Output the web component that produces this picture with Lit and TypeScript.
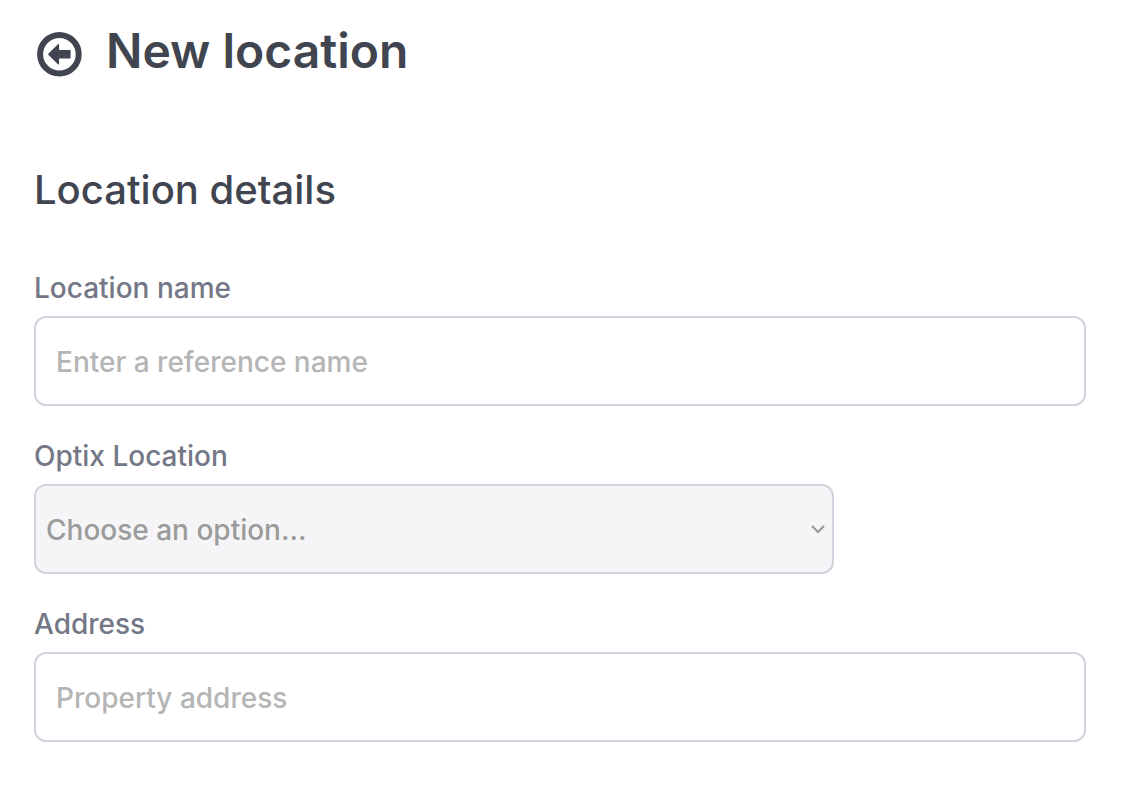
import { LitElement, html, css } from "lit";
import { customElement } from "lit/decorators.js";

@customElement("app-root")
export class AppRoot extends LitElement {
  static styles = css`
    :host {
      display: block;
      box-sizing: border-box;
      padding: 22px 38px 54px 34px;
      font-family: Inter, "Liberation Sans", sans-serif;
      color: #404550;
      background: #fff;
    }
    * { box-sizing: border-box; }
    .header { display: flex; align-items: center; gap: 22px; }
    .back {
      display: flex;
      padding: 6px 0 0;
      border: 0;
      background: none;
      color: inherit;
      cursor: pointer;
    }
    .back svg { width: 50px; height: 50px; }
    h1 { margin: 0; font-size: 48px; line-height: 58px; font-weight: 600; }
    h2 { margin: 86px 0 0; font-size: 40px; line-height: 48px; font-weight: 500; }
    form { display: flex; flex-direction: column; gap: 32px; margin-top: 56px; }
    .field { display: flex; flex-direction: column; }
    label {
      margin-bottom: 10px;
      font-size: 28px;
      line-height: 36px;
      font-weight: 500;
      color: #737786;
    }
    input, select {
      width: 100%;
      height: 90px;
      border: 2px solid #ced5dc;
      border-radius: 12px;
      font: inherit;
      font-size: 28px;
      font-weight: 450;
      background: #fff;
      color: #404550;
    }
    input { padding: 2px 20px 0; }
    input::placeholder { color: #b5b5b5; opacity: 1; }
    .select { position: relative; width: 76%; }
    select {
      display: block;
      appearance: none;
      padding: 2px 40px 0 10px;
      background: #f5f5f8;
      color: #9b9b9b;
    }
    .chevron {
      position: absolute;
      top: 38px;
      right: 8px;
      width: 16px;
      height: 14px;
      pointer-events: none;
    }
  `;

  render() {
    return html`
      <header class="header">
        <button class="back" type="button" aria-label="Back">
          <svg viewBox="0 0 50 50" aria-hidden="true">
            <circle cx="25.4" cy="25.3" r="19.3" fill="none" stroke="currentColor" stroke-width="6" />
            <path
              d="M14.8 25.3 24.4 15.8V21.8H35.9V28.8H24.4V34.8Z"
              fill="currentColor"
              stroke="currentColor"
              stroke-width="1.4"
              stroke-linejoin="round"
            />
          </svg>
        </button>
        <h1>New location</h1>
      </header>
      <h2>Location details</h2>
      <form>
        <div class="field">
          <label for="name">Location name</label>
          <input id="name" type="text" placeholder="Enter a reference name" />
        </div>
        <div class="field">
          <label for="optix">Optix Location</label>
          <div class="select">
            <select id="optix"><option>Choose an option...</option></select>
            <svg class="chevron" viewBox="0 0 16 14" aria-hidden="true">
              <path d="M2 4 8 10 14 4" fill="none" stroke="#999" stroke-width="2.2" />
            </svg>
          </div>
        </div>
        <div class="field">
          <label for="address">Address</label>
          <input id="address" type="text" placeholder="Property address" />
        </div>
      </form>
    `;
  }
}
